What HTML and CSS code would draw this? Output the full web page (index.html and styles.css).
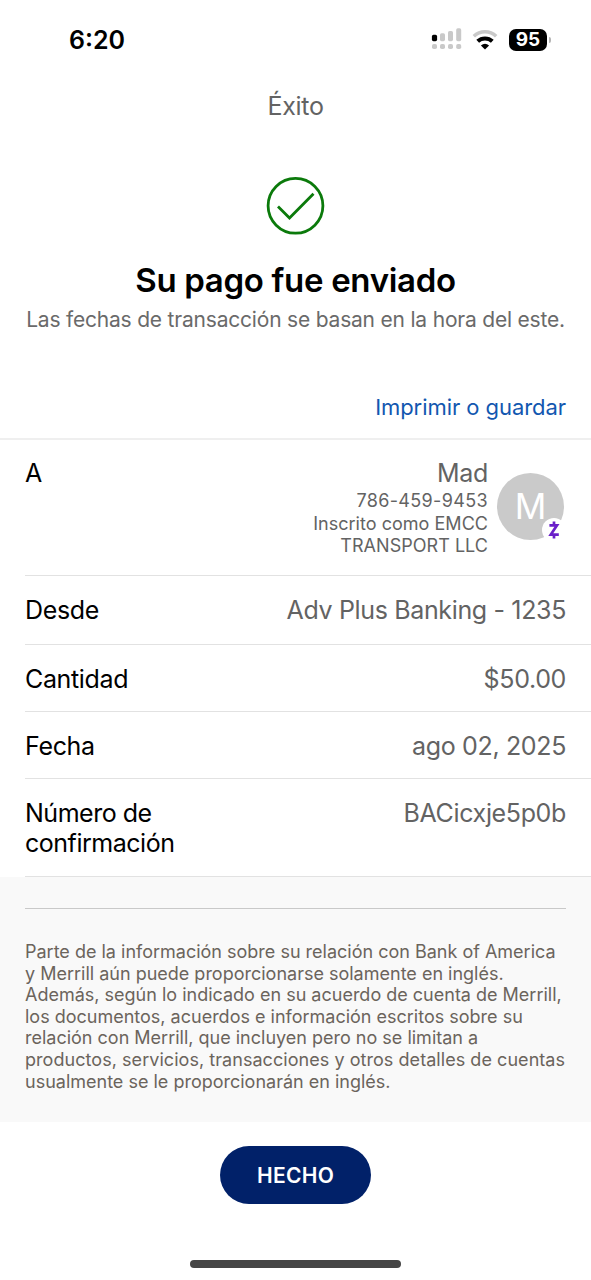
FILE: index.html
```
<!DOCTYPE html>
<html lang="es">
<head>
<meta charset="utf-8">
<title>Éxito</title>
<link rel="stylesheet" href="styles.css">
</head>
<body>
<div class="screen">
  <header class="status">
    <span class="time">6:20</span>
    <div class="status-icons">
      <svg class="signal" width="32" height="24" viewBox="0 0 32 24">
        <g fill="#c9c9c9"><rect x="9" y="5.2" width="5" height="8" rx="1.6"/><rect x="17" y="3" width="5" height="10.2" rx="1.6"/><rect x="25.2" y="0.3" width="5" height="12.9" rx="1.6"/>
        <rect x="1" y="16" width="5" height="5" rx="1.8"/><rect x="9" y="16" width="5" height="5" rx="1.8"/><rect x="17" y="16" width="5" height="5" rx="1.8"/><rect x="25.2" y="16" width="5" height="5" rx="1.8"/></g>
        <rect x="0.9" y="6.8" width="5.2" height="6.4" rx="1.6" fill="#000"/>
      </svg>
      <svg class="wifi" width="26" height="20" viewBox="0 0 26 20">
        <path d="M1.8 6.2A16.5 16.5 0 0 1 24.2 6.2" fill="none" stroke="#c9c9c9" stroke-width="3.6"/>
        <path d="M5.7 11.3A10.6 10.6 0 0 1 20.3 11.3" fill="none" stroke="#000" stroke-width="4"/>
        <path d="M13 19.6L8.9 15.5Q13 12 17.1 15.5Z"/>
      </svg>
      <div class="battery">95</div>
      <span class="battery-tip"></span>
    </div>
  </header>
  <h1 class="page-title">Éxito</h1>
  <svg class="check" width="60" height="60" viewBox="0 0 60 60" fill="none" stroke="#0b7a0b">
    <circle cx="29.5" cy="29.8" r="27.4" stroke-width="2.8"/>
    <path d="M12 30.6L23.5 42L47.5 17.8" stroke-width="2.8"/>
  </svg>
  <h2 class="headline">Su pago fue enviado</h2>
  <p class="subtitle">Las fechas de transacción se basan en la hora del este.</p>
  <a class="print">Imprimir o guardar</a>
  <dl class="details">
    <div class="row recipient">
      <dt>A</dt>
      <dd>
        <div class="payee">
          <span class="payee-name">Mad</span>
          <span class="phone">786-459-9453</span>
          <span class="enrolled">Inscrito como EMCC<br>TRANSPORT LLC</span>
        </div>
        <div class="avatar">M
          <span class="badge"><svg width="12" height="18" viewBox="0 0 12 18" fill="none" stroke="#6a1fc9" stroke-width="2.7"><path d="M1.4 4.3H9L2.8 13.6H10.8M6 .5V4.5M6 13.5V17.6"/></svg></span>
        </div>
      </dd>
    </div>
    <div class="row from"><dt>Desde</dt><dd>Adv Plus Banking - 1235</dd></div>
    <div class="row"><dt>Cantidad</dt><dd>$50.00</dd></div>
    <div class="row"><dt>Fecha</dt><dd>ago 02, 2025</dd></div>
    <div class="row confirm"><dt>Número de<br>confirmación</dt><dd class="code">BACicxje5p0b</dd></div>
  </dl>
  <section class="notice">
    <p>Parte de la información sobre su relación con Bank of America<br>y Merrill aún puede proporcionarse solamente en inglés.<br>Además, según lo indicado en su acuerdo de cuenta de Merrill,<br>los documentos, acuerdos e información escritos sobre su<br>relación con Merrill, que incluyen pero no se limitan a<br><span class="wide">productos, servicios, transacciones y otros detalles de cuentas</span><br>usualmente se le proporcionarán en inglés.</p>
  </section>
  <button class="done">HECHO</button>
  <div class="home-bar"></div>
</div>
</body>
</html>
```
FILE: styles.css
```
* { box-sizing: border-box; margin: 0; padding: 0; }
body { background: #fff; font-family: Inter, "Liberation Sans", sans-serif; color: #000; }
.screen { width: 591px; height: 1280px; display: flex; flex-direction: column; align-items: center; overflow: hidden; white-space: nowrap; }
.status { width: 100%; height: 80px; padding: 0 40px 0 69px; display: flex; align-items: center; justify-content: space-between; }
.time { font-size: 25px; font-weight: 600; letter-spacing: 0; }
.status-icons { display: flex; align-items: center; }
.wifi { margin-left: 9px; }
.battery { margin-left: 11px; width: 38px; height: 22px; border-radius: 7px; background: #000; color: #fff; font-size: 19px; font-weight: 700; line-height: 22px; text-align: center; }
.battery-tip { width: 2px; height: 6px; margin-left: 2px; border-radius: 0 2px 2px 0; background: #b5b5b5; }
.page-title { margin-top: 11px; font-size: 25px; line-height: 30px; font-weight: 400; color: #636363; letter-spacing: -0.3px; }
.check { margin-top: 55px; }
.headline { margin-top: 25px; font-size: 33px; line-height: 38px; font-weight: 600; letter-spacing: -0.32px; }
.subtitle { margin-top: 7px; font-size: 21px; line-height: 27px; color: #6a6a6a; letter-spacing: -0.2px; }
.print { align-self: flex-end; margin: 60px 25px 0 0; font-size: 22px; line-height: 28px; color: #1257b0; letter-spacing: -0.06px; }
.details { width: 100%; margin-top: 17px; border-top: 2px solid #efefef; padding-left: 25px; }
.row { height: 67px; padding: 18px 25px 0 0; display: flex; justify-content: space-between; border-bottom: 1px solid #e2e2e2; font-size: 25px; line-height: 30px; letter-spacing: -0.35px; }
.row dd { color: #636363; }
.recipient { height: 136px; }
.recipient dd { display: flex; gap: 9px; margin-right: 2px; }
.from { height: 69px; padding-top: 19px; }
.row:nth-child(n+3) { padding-top: 19px; }
.confirm { height: 98px; }
.confirm dt { letter-spacing: -0.48px; }
.payee { display: flex; flex-direction: column; align-items: flex-end; text-align: right; font-size: 18px; }
.payee-name { font-size: 25px; line-height: 30px; }
.phone { line-height: 25px; letter-spacing: 0.35px; }
.enrolled { line-height: 22px; letter-spacing: 0.03px; }
.avatar { position: relative; width: 67px; height: 67px; margin-top: 15px; border-radius: 50%; background: #cacaca; color: #fff; font-size: 35px; line-height: 67px; text-align: center; }
.badge { position: absolute; left: 45px; top: 45px; width: 24px; height: 24px; border-radius: 50%; background: #fff; display: flex; align-items: center; justify-content: center; }
.notice { width: 100%; height: 245px; padding: 31px 25px 0; background: #f9f9f9; }
.notice p { border-top: 1px solid #c9c9c9; padding-top: 32px; font-size: 18px; line-height: 21.6px; color: #6b645c; }
.wide { letter-spacing: 0.05px; }
.done { margin-top: 24px; width: 151px; height: 58px; border: 0; border-radius: 29px; background: #012169; color: #fff; font-family: inherit; font-size: 21px; font-weight: 600; letter-spacing: 0.3px; }
.home-bar { margin-top: 56px; width: 211px; height: 8px; border-radius: 4px; background: #454545; }
```
